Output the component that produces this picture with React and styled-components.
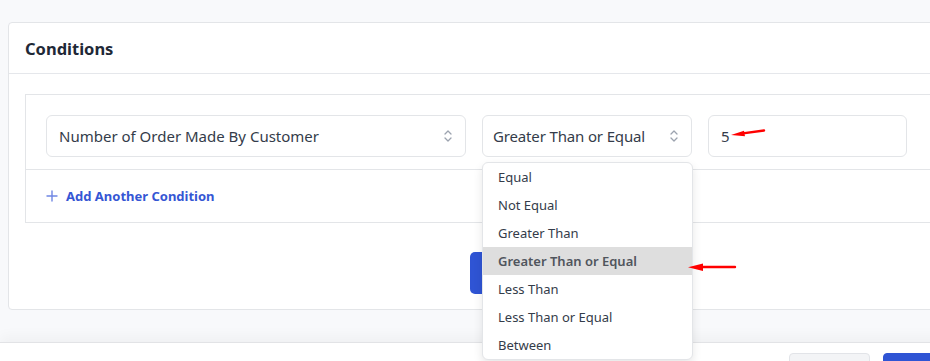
import React from "react";
import styled, { createGlobalStyle } from "styled-components";

const Global = createGlobalStyle`
  html, body { margin: 0; padding: 0; }
  body {
    background: #f8f9fb;
    font-family: "Noto Sans", "Open Sans", Arial, sans-serif;
    overflow: hidden;
  }
  * { box-sizing: border-box; }
`;

const Screen = styled.div`
  width: 930px;
  height: 361px;
  overflow: hidden;
  display: flex;
  flex-direction: column;
  position: relative;
`;

const Main = styled.main`
  flex: 0 0 342px;
  padding: 22px 0 0 8px;
  background: #f8f9fb;
`;

const Card = styled.section`
  width: 1044px;
  background: #fff;
  border: 1px solid #e3e5e8;
  border-radius: 4px;
`;

const CardHeader = styled.header`
  height: 51px;
  display: flex;
  align-items: center;
  padding: 0 16px;
  border-bottom: 1px solid #e5e7eb;
`;

const Title = styled.h2`
  margin: 0;
  font-size: 16.5px;
  font-weight: 700;
  color: #1f2937;
`;

const CardBody = styled.div`
  padding: 20px 16px 15px;
  display: flex;
  flex-direction: column;
`;

const ConditionBox = styled.div`
  border: 1px solid #e3e5e8;
`;

const ConditionRow = styled.div`
  display: grid;
  grid-template-columns: 420px 210px 199px;
  gap: 16px;
  padding: 20px 20px 12px;
  border-bottom: 1px solid #e3e5e8;
`;

const Field = styled.div`
  position: relative;
  height: 42px;
  border: 1px solid #e3e5e8;
  border-radius: 6px;
  background: #fff;
  display: flex;
  align-items: center;
  justify-content: space-between;
  padding: 0 12px;
  font-size: 15px;
  color: #343c4a;
`;

const FieldText = styled.span`
  white-space: nowrap;
  margin-left: ${(p) => p.$indent || 0}px;
  letter-spacing: ${(p) => p.$tight ? "-0.15px" : "0"};
`;

const Chevrons = () => (
  <svg width="10" height="14" viewBox="0 0 10 14" fill="none" stroke="#9ca3af" strokeWidth="1.3" strokeLinecap="round" strokeLinejoin="round">
    <path d="M2 5 L5 2 L8 5" />
    <path d="M2 9 L5 12 L8 9" />
  </svg>
);

const AddRow = styled.div`
  height: 52px;
  display: flex;
  align-items: center;
  gap: 8px;
  padding-left: 20px;
  color: #3556d4;
  font-size: 13px;
  font-weight: 700;
`;

const ButtonRow = styled.div`
  display: flex;
  justify-content: center;
  padding-top: 29px;
`;

const PrimaryButton = styled.button`
  width: 120px;
  height: 42px;
  border: none;
  border-radius: 5px;
  background: #2f54d4;
`;

const Footer = styled.footer`
  flex: 1;
  background: #fff;
  border-top: 1px solid #e2e3e6;
  box-shadow: 0 -6px 12px rgba(0, 0, 0, 0.035);
  display: flex;
  justify-content: flex-end;
  gap: 13px;
  padding: 10px 0 0 0;
  margin-right: -60px;
`;

const FooterButton = styled.button`
  width: ${(p) => p.$w}px;
  height: 36px;
  border-radius: 4px;
  border: 1px solid ${(p) => (p.$primary ? "#2f54d4" : "#e2e4e8")};
  background: ${(p) => (p.$primary ? "#2f54d4" : "#f3f4f6")};
`;

const Menu = styled.ul`
  position: absolute;
  left: -1px;
  top: 46px;
  width: 211px;
  margin: 0;
  padding: 0;
  list-style: none;
  background: #fff;
  border: 1px solid #e3e5e8;
  border-radius: 6px;
  box-shadow: 0 4px 10px rgba(0, 0, 0, 0.1);
  overflow: hidden;
  z-index: 5;
`;

const MenuItem = styled.li`
  height: 28px;
  display: flex;
  align-items: center;
  padding-left: 15px;
  font-size: 13px;
  color: ${(p) => (p.$active ? "#50555d" : "#343c4a")};
  font-weight: ${(p) => (p.$active ? 600 : 400)};
  background: ${(p) => (p.$active ? "#dedede" : "transparent")};
`;

const Annotation = styled.svg`
  position: absolute;
  left: 0;
  top: 0;
  pointer-events: none;
  z-index: 10;
`;

const options = [
  "Equal",
  "Not Equal",
  "Greater Than",
  "Greater Than or Equal",
  "Less Than",
  "Less Than or Equal",
  "Between",
];

export default function App() {
  return (
    <>
      <Global />
      <Screen>
        <Main>
          <Card>
            <CardHeader>
              <Title>Conditions</Title>
            </CardHeader>
            <CardBody>
              <ConditionBox>
                <ConditionRow>
                  <Field>
                    <FieldText>Number of Order Made By Customer</FieldText>
                    <Chevrons />
                  </Field>
                  <Field>
                    <FieldText $indent={-2} $tight>Greater Than or Equal</FieldText>
                    <Chevrons />
                    <Menu>
                      {options.map((o) => (
                        <MenuItem key={o} $active={o === "Greater Than or Equal"}>
                          {o}
                        </MenuItem>
                      ))}
                    </Menu>
                  </Field>
                  <Field>
                    <FieldText>5</FieldText>
                  </Field>
                </ConditionRow>
                <AddRow>
                  <svg width="12" height="12" viewBox="0 0 12 12" stroke="#6f86e3" strokeWidth="1.4" strokeLinecap="round">
                    <path d="M6 1 V11 M1 6 H11" />
                  </svg>
                  Add Another Condition
                </AddRow>
              </ConditionBox>
              <ButtonRow>
                <PrimaryButton aria-label="Save" />
              </ButtonRow>
            </CardBody>
          </Card>
        </Main>
        <Footer>
          <FooterButton $w={81} aria-label="Cancel" />
          <FooterButton $w={107} $primary aria-label="Save" />
        </Footer>
        <Annotation width="930" height="361">
          <path d="M764 130.5 L741 133.6" stroke="#f00" strokeWidth="2.4" strokeLinecap="round" />
          <path d="M731 135 L744 130.8 L745 136.2 Z" fill="#f00" />
          <path d="M735 267 L700 267" stroke="#f00" strokeWidth="2.4" strokeLinecap="round" />
          <path d="M688 267.3 L703 263.5 L703 271 Z" fill="#f00" />
        </Annotation>
      </Screen>
    </>
  );
}
